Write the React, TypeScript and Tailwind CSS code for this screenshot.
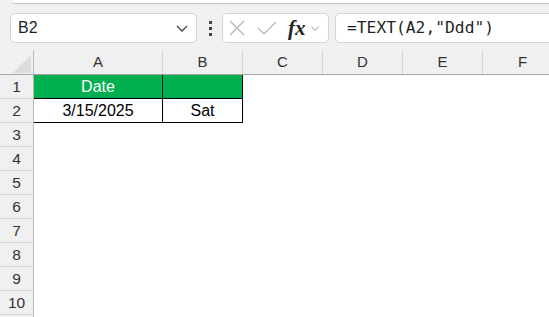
import React from "react";

const colHeads = [
  { l: "A", c: "w-[129px]" },
  { l: "B", c: "w-[80px]" },
  { l: "C", c: "w-[80px]" },
  { l: "D", c: "w-[80px]" },
  { l: "E", c: "w-[80px]" },
  { l: "F", c: "w-[80px]" },
];

function Chevron({ className }: { className?: string }) {
  return (
    <svg className={className} viewBox="0 0 16 16" fill="none" stroke="currentColor" strokeWidth="1.3">
      <path d="M3 6l5 5 5-5" />
    </svg>
  );
}

export default function App() {
  const rows = [1, 2, 3, 4, 5, 6, 7, 8, 9, 10, 11];
  return (
    <div
      className="w-[549px] h-[317px] overflow-hidden bg-white text-[#1f1f1f]"
      style={{ fontFamily: '"Liberation Sans", Arial, sans-serif' }}
    >
      {/* toolbar */}
      <div className="h-[50px] bg-[#f0f0f0] flex flex-col">
        <div className="ml-[12px] h-[3px] bg-white rounded-bl-[6px] shadow-[0_1px_1px_rgba(0,0,0,0.18)]" />
        <div className="mt-[10px] flex items-center h-[30px]">
          <div className="ml-[10px] shrink-0 w-[187px] h-[30px] bg-white border border-[#d4d4d4] rounded-[5px] flex items-center justify-between pl-[7px] pr-[6px]">
            <span className="text-[16px] leading-none">B2</span>
            <Chevron className="w-[16px] h-[16px] text-[#444]" />
          </div>
          <div className="ml-[11px] shrink-0 w-[4px] flex flex-col items-center gap-[3px]">
            <div className="w-[3px] h-[3px] bg-[#444]" />
            <div className="w-[3px] h-[3px] bg-[#444]" />
            <div className="w-[3px] h-[3px] bg-[#444]" />
          </div>
          <div className="ml-[10px] shrink-0 w-[107px] h-[30px] bg-white border border-[#d4d4d4] rounded-[5px] flex items-center pl-[6px]">
            <svg className="w-[16px] h-[16px] text-[#b4b4b4]" viewBox="0 0 16 16" fill="none" stroke="currentColor" strokeWidth="1.2">
              <path d="M1 1l14 14M15 1L1 15" />
            </svg>
            <svg className="ml-[12px] w-[20px] h-[16px] text-[#b4b4b4]" viewBox="0 0 20 16" fill="none" stroke="currentColor" strokeWidth="1.2">
              <path d="M1 8l6 6L19 2" />
            </svg>
            <span
              className="ml-[11px] text-[21px] italic font-semibold leading-none text-[#222]"
              style={{ fontFamily: '"Liberation Serif", "Times New Roman", serif' }}
            >
              fx
            </span>
            <Chevron className="ml-[3px] w-[12px] h-[12px] text-[#999]" />
          </div>
          <div className="ml-[6px] shrink-0 w-[230px] h-[30px] bg-white border border-[#d4d4d4] rounded-[5px] flex items-center pl-[11px]">
            <span
              className="text-[16.3px] leading-none"
              style={{ fontFamily: '"DejaVu Sans Mono", "Liberation Mono", monospace' }}
            >
              =TEXT(A2,"Ddd")
            </span>
          </div>
        </div>
      </div>

      {/* column header */}
      <div className="flex h-[25px] bg-[#f0f0f0] border-b border-[#a6a6a6]">
        <div className="w-[34px] shrink-0 border-r border-[#b8b8b8] relative">
          <svg className="absolute right-[2px] bottom-[1px] w-[18px] h-[18px]" viewBox="0 0 18 18">
            <path d="M18 0L18 18L0 18Z" fill="#dcdcdc" />
          </svg>
        </div>
        {colHeads.map((c) => (
          <div
            key={c.l}
            className={`${c.c} shrink-0 border-r border-[#d6d6d6] flex items-center justify-center text-[15px] text-[#333] pt-[1px]`}
          >
            {c.l}
          </div>
        ))}
      </div>

      {/* rows */}
      {rows.map((r) => (
        <div key={r} className="flex h-[24px]">
          <div className="w-[34px] shrink-0 bg-[#f0f0f0] border-r border-b border-r-[#b8b8b8] border-b-[#d6d6d6] flex items-center justify-center text-[15.5px] text-[#333]">
            {r <= 10 ? r : ""}
          </div>
          {r === 1 && (
            <>
              <div className="w-[129px] shrink-0 bg-[#00b050] border-r border-b border-black flex items-center justify-center text-[16px] text-white">
                Date
              </div>
              <div className="w-[80px] shrink-0 bg-[#00b050] border-r border-b border-black" />
            </>
          )}
          {r === 2 && (
            <>
              <div className="w-[129px] shrink-0 border-r border-b border-black flex items-center justify-center text-[16px] text-black">
                3/15/2025
              </div>
              <div className="w-[80px] shrink-0 border-r border-b border-black flex items-center justify-center text-[16px] text-black">
                Sat
              </div>
            </>
          )}
        </div>
      ))}
    </div>
  );
}
